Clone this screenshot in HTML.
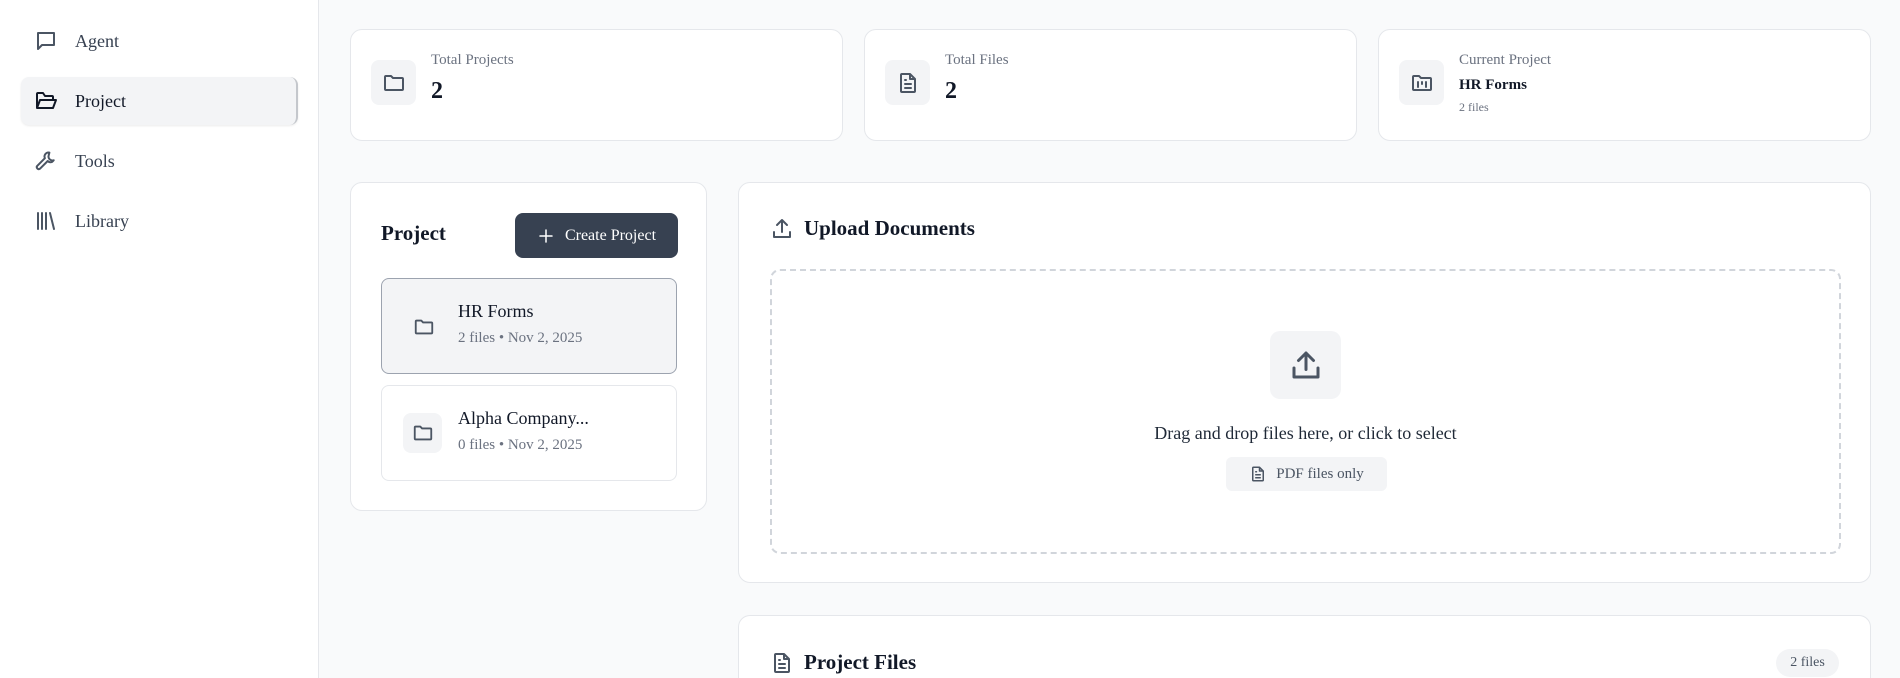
<!DOCTYPE html>
<html style="overflow:hidden;height:678px"><head><meta charset="utf-8"><style>
*{box-sizing:border-box;margin:0;padding:0}
body{width:1900px;height:678px;overflow:hidden;background:#f9fafb;font-family:"Liberation Serif","DejaVu Serif",serif;color:#111827;position:relative}
.side{position:absolute;left:0;top:0;width:319px;height:678px;background:#fff;border-right:1px solid #e5e7eb}
.nav{position:absolute;left:21px;width:277px;height:48px;display:flex;align-items:center;font-size:18px;color:#374151}
.nav svg{position:absolute;left:13px}
.nav span{position:absolute;left:54px}
.nav.act{background:#f3f4f6;border-radius:8px;border-right:2px solid #c4c7cc;box-shadow:0 1px 2px rgba(0,0,0,.08);color:#111827}
.card{position:absolute;background:#fff;border:1px solid #e5e7eb;border-radius:12px}
.ib{position:absolute;background:#f3f4f6;border-radius:8px;display:flex;align-items:center;justify-content:center}
.lbl{position:absolute;font-size:15px;color:#6b7280}
.val{position:absolute;font-size:24px;font-weight:bold}
svg{fill:none;stroke:#4b5563;stroke-width:2;stroke-linecap:round;stroke-linejoin:round}
.t{position:absolute;font-size:21px;font-weight:bold;color:#111827}
</style></head><body>
<div class="side">
 <div class="nav" style="top:17px"><svg width="24" height="24" viewBox="0 0 24 24"><path d="M4 4h16v12H8l-4 4z"/></svg><span>Agent</span></div>
 <div class="nav act" style="top:77px"><svg width="24" height="24" viewBox="0 0 24 24" style="stroke:#111827"><path d="M3 19V5a1 1 0 0 1 1-1h5l2 3h7a1 1 0 0 1 1 1v2M3 19l3-8h16l-3 8z"/></svg><span>Project</span></div>
 <div class="nav" style="top:137px"><svg width="24" height="24" viewBox="0 0 24 24"><path d="M14.7 6.3a4 4 0 0 0 5 5l-1.5 1.5a4 4 0 0 1-4.5-.8L6 19.7a2 2 0 0 1-2.8-2.8l7.7-7.7a4 4 0 0 1 4.5-5.6z"/></svg><span>Tools</span></div>
 <div class="nav" style="top:197px"><svg width="24" height="24" viewBox="0 0 24 24"><path d="M4 4v16M8 4v16M12 4v16M16 4l4 16"/></svg><span>Library</span></div>
</div>

<div class="card" style="left:350px;top:29px;width:493px;height:112px">
 <div class="ib" style="left:20px;top:30px;width:45px;height:45px"><svg width="24" height="24" viewBox="0 0 24 24"><path d="M3 6a1 1 0 0 1 1-1h5l2 2h9a1 1 0 0 1 1 1v10a1 1 0 0 1-1 1H4a1 1 0 0 1-1-1z"/></svg></div>
 <div class="lbl" style="left:80px;top:22px">Total Projects</div>
 <div class="val" style="left:80px;top:48px">2</div>
</div>
<div class="card" style="left:864px;top:29px;width:493px;height:112px">
 <div class="ib" style="left:20px;top:30px;width:45px;height:45px"><svg width="24" height="24" viewBox="0 0 24 24"><path d="M14 3H6a1 1 0 0 0-1 1v16a1 1 0 0 0 1 1h12a1 1 0 0 0 1-1V8zM14 3v5h5M9 13h6M9 17h6M9 9h1"/></svg></div>
 <div class="lbl" style="left:80px;top:22px">Total Files</div>
 <div class="val" style="left:80px;top:48px">2</div>
</div>
<div class="card" style="left:1378px;top:29px;width:493px;height:112px">
 <div class="ib" style="left:20px;top:30px;width:45px;height:45px"><svg width="24" height="24" viewBox="0 0 24 24"><path d="M3 6a1 1 0 0 1 1-1h5l2 2h9a1 1 0 0 1 1 1v10a1 1 0 0 1-1 1H4a1 1 0 0 1-1-1zM8 11v5M12 11v2M16 11v5"/></svg></div>
 <div class="lbl" style="left:80px;top:22px">Current Project</div>
 <div style="position:absolute;left:80px;top:47px;font-size:15px;font-weight:bold">HR Forms</div>
 <div style="position:absolute;left:80px;top:70px;font-size:12px;color:#6b7280">2 files</div>
</div>

<div class="card" style="left:350px;top:182px;width:357px;height:329px">
 <div class="t" style="left:30px;top:38px">Project</div>
 <div style="position:absolute;left:164px;top:30px;width:163px;height:45px;background:#374151;border-radius:8px;color:#fff;font-size:16px;display:flex;align-items:center;justify-content:center;gap:10px"><svg width="18" height="18" viewBox="0 0 24 24" style="stroke:#fff"><path d="M12 4v16M4 12h16"/></svg>Create Project</div>
 <div style="position:absolute;left:30px;top:95px;width:296px;height:96px;background:#f3f4f6;border:1px solid #9ca3af;border-radius:8px">
  <svg style="position:absolute;left:31px;top:37px" width="22" height="22" viewBox="0 0 24 24"><path d="M3 6a1 1 0 0 1 1-1h5l2 2h9a1 1 0 0 1 1 1v10a1 1 0 0 1-1 1H4a1 1 0 0 1-1-1z"/></svg>
  <div style="position:absolute;left:76px;top:22px;font-size:18px">HR Forms</div>
  <div style="position:absolute;left:76px;top:51px;font-size:15px;color:#6b7280">2 files • Nov 2, 2025</div>
 </div>
 <div style="position:absolute;left:30px;top:202px;width:296px;height:96px;background:#fff;border:1px solid #e5e7eb;border-radius:8px">
  <div class="ib" style="left:21px;top:27px;width:39px;height:40px"><svg width="22" height="22" viewBox="0 0 24 24"><path d="M3 6a1 1 0 0 1 1-1h5l2 2h9a1 1 0 0 1 1 1v10a1 1 0 0 1-1 1H4a1 1 0 0 1-1-1z"/></svg></div>
  <div style="position:absolute;left:76px;top:22px;font-size:18px">Alpha Company...</div>
  <div style="position:absolute;left:76px;top:51px;font-size:15px;color:#6b7280">0 files • Nov 2, 2025</div>
 </div>
</div>

<div class="card" style="left:738px;top:182px;width:1133px;height:401px">
 <svg style="position:absolute;left:31px;top:34px" width="24" height="24" viewBox="0 0 24 24"><path d="M12 15V3M7 8l5-5 5 5M4 15v5h16v-5"/></svg>
 <div class="t" style="left:65px;top:33px">Upload Documents</div>
 <div style="position:absolute;left:31px;top:86px;width:1071px;height:285px;border:2px dashed #d1d5db;border-radius:10px">
  <div class="ib" style="left:498px;top:60px;width:71px;height:68px;border-radius:10px"><svg width="36" height="36" viewBox="0 0 24 24"><path d="M12 15V4M7 9l5-5 5 5M4 14v6h16v-6"/></svg></div>
  <div style="position:absolute;left:0;width:100%;top:152px;text-align:center;font-size:18px;color:#1f2937">Drag and drop files here, or click to select</div>
  <div style="position:absolute;left:454px;top:186px;width:161px;height:34px;background:#f3f4f6;border-radius:6px;display:flex;align-items:center;justify-content:center;gap:9px;font-size:15px;color:#4b5563"><svg width="18" height="18" viewBox="0 0 24 24"><path d="M14 3H6a1 1 0 0 0-1 1v16a1 1 0 0 0 1 1h12a1 1 0 0 0 1-1V8zM14 3v5h5M9 13h6M9 17h6M9 9h1"/></svg>PDF files only</div>
 </div>
</div>

<div class="card" style="left:738px;top:615px;width:1133px;height:80px;border-bottom:none;border-radius:12px 12px 0 0">
 <svg style="position:absolute;left:31px;top:35px" width="24" height="24" viewBox="0 0 24 24"><path d="M14 3H6a1 1 0 0 0-1 1v16a1 1 0 0 0 1 1h12a1 1 0 0 0 1-1V8zM14 3v5h5M9 13h6M9 17h6M9 9h1"/></svg>
 <div class="t" style="left:65px;top:34px">Project Files</div>
 <div style="position:absolute;left:1037px;top:33px;width:63px;height:28px;background:#f3f4f6;border-radius:14px;font-size:14px;color:#4b5563;display:flex;align-items:center;justify-content:center">2 files</div>
</div>
</body></html>
